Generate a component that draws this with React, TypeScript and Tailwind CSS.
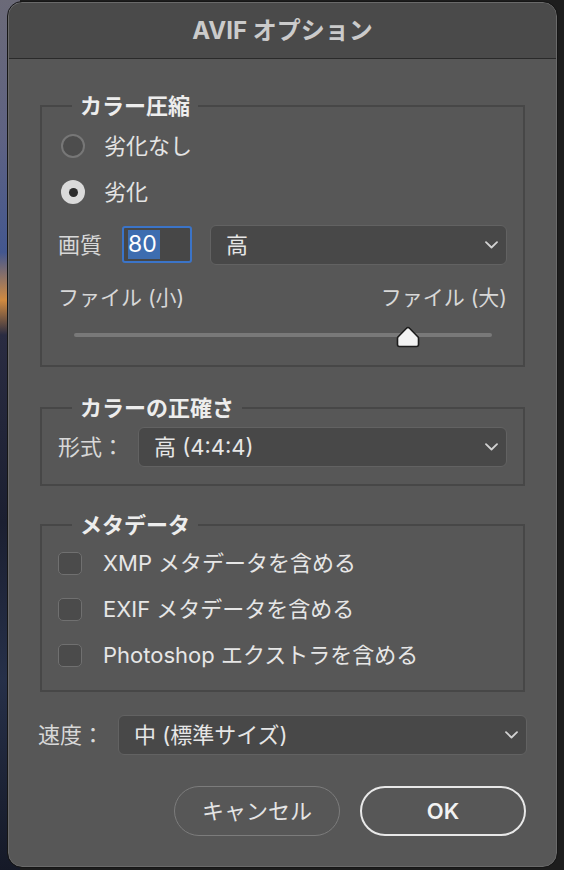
import { useState } from 'react';

function Chevron() {
    return (
        <svg width="13" height="8" viewBox="0 0 13 8" fill="none" className="shrink-0">
            <path d="M1 1.2l5.5 5.3L12 1.2" stroke="#d2d2d2" strokeWidth="1.8" strokeLinecap="round" strokeLinejoin="round" />
        </svg>
    );
}

function Select({ value, className = '' }: { value: string; className?: string }) {
    return (
        <div className={`flex h-[40px] items-center justify-between rounded-[6px] border-[1.5px] border-[#626262] bg-[#484848] pl-[15px] pr-[8px] text-[22px] text-[#e6e6e6] ${className}`}>
            <span className="leading-none">{value}</span>
            <Chevron />
        </div>
    );
}

function Radio({ checked, label }: { checked: boolean; label: string }) {
    return (
        <div className="flex items-center">
            {checked ? (
                <div className="ml-[3px] flex h-[24px] w-[24px] items-center justify-center rounded-full bg-[#dadada]">
                    <div className="h-[9px] w-[9px] rounded-full bg-[#2c2c2c]" />
                </div>
            ) : (
                <div className="ml-[3px] h-[24px] w-[24px] rounded-full border-2 border-[#777777] bg-[#4d4d4d]" />
            )}
            <span className="ml-[19px] text-[22px] leading-none text-[#e4e4e4]">{label}</span>
        </div>
    );
}

function Checkbox({ label }: { label: string }) {
    return (
        <div className="flex h-[46px] items-center">
            <div className="h-[23px] w-[24px] rounded-[5px] border-[1.5px] border-[#707070] bg-[#4b4b4b]" />
            <span className="ml-[21px] text-[22px] leading-none text-[#e6e6e6]">{label}</span>
        </div>
    );
}

function Group({ title, className = '', children }: { title: string; className?: string; children: React.ReactNode }) {
    return (
        <fieldset className={`mx-[2px] border-2 border-[#474747] px-[16px] ${className}`}>
            <legend className="ml-[14px] px-[8px] text-[22px] font-bold leading-[28px] text-[#ededed]">{title}</legend>
            {children}
        </fieldset>
    );
}

export default function App() {
    const [quality] = useState(80);

    return (
        <div className="h-[870px] w-[564px] overflow-hidden bg-[#1d1d1d] bg-[linear-gradient(to_right,transparent_20px,#1d1d1d_20px),linear-gradient(to_bottom,#6b6a78,#5e6283_16%,#43578f_29%,#d08a40_34.5%,#2a2c42_38.5%,#1b1f31_60%,#263049_78%,#151927)] pt-[2px] pl-[8px] [font-family:Inter,'Noto_Sans_CJK_JP',sans-serif]">
            <div className="flex h-[865px] w-[549px] flex-col overflow-hidden rounded-[14px] border border-[#6a6a6a] bg-[#575757] outline outline-[#161616]">
                {/* Title bar */}
                <div className="flex h-[56px] shrink-0 items-center justify-center border-b border-[#2a2a2a] bg-[#4a4a4a]">
                    <span className="text-[24px] font-bold leading-none text-[#cbcbcb]">AVIF オプション</span>
                </div>

                <div className="flex flex-col px-[29px] pt-[33px]">
                    {/* カラー圧縮 */}
                    <Group title="カラー圧縮" className="pb-[5px]">
                        <div className="flex h-[52px] items-center">
                            <Radio checked={false} label="劣化なし" />
                        </div>
                        <div className="flex h-[40px] items-center">
                            <Radio checked label="劣化" />
                        </div>
                        <div className="mt-[13px] flex h-[39px] items-center">
                            <span className="text-[22px] leading-none text-[#d8d8d8]">画質</span>
                            <div className="ml-[20px] flex h-[37px] w-[70px] shrink-0 items-center rounded-[3px] border-2 border-[#3b74c8] bg-[#474747] pl-[4px]">
                                <span className="flex h-[29px] w-[32px] items-center bg-[#3d6db0] text-[23px] leading-none text-white">{quality}</span>
                            </div>
                            <Select value="高" className="ml-[18px] flex-1" />
                        </div>
                        <div className="mt-[20px] flex h-[26px] items-center justify-between text-[21px] leading-none text-[#d8d8d8]">
                            <span>ファイル (小)</span>
                            <span>ファイル (大)</span>
                        </div>
                        <div className="relative ml-[16px] mr-[15px] flex h-[50px] items-center">
                            <div className="h-[4px] w-full rounded-full bg-[#797979]" />
                            <svg
                                width="25"
                                height="22"
                                viewBox="0 0 25 22"
                                className="absolute top-[16px] -translate-x-1/2"
                                style={{ left: `${quality}%` }}
                            >
                                <path
                                    d="M11 2.2a2 2 0 0 1 3 0l8.3 8.5a2 2 0 0 1 .7 1.5V18.5a2 2 0 0 1-2 2H4a2 2 0 0 1-2-2V12.2a2 2 0 0 1 .7-1.5z"
                                    fill="#f2f2f2"
                                    stroke="#1c1c1c"
                                    strokeWidth="1.6"
                                    strokeLinejoin="round"
                                />
                            </svg>
                        </div>
                    </Group>

                    {/* カラーの正確さ */}
                    <Group title="カラーの正確さ" className="mt-[27px] pt-[5px] pb-[17px]">
                        <div className="flex items-center">
                            <span className="w-[66px] shrink-0 text-[22px] leading-none text-[#d8d8d8]">形式：</span>
                            <Select value="高 (4:4:4)" className="ml-[14px] flex-1" />
                        </div>
                    </Group>

                    {/* メタデータ */}
                    <Group title="メタデータ" className="mt-[25px] pt-[1px] pb-[12px]">
                        <Checkbox label="XMP メタデータを含める" />
                        <Checkbox label="EXIF メタデータを含める" />
                        <Checkbox label="Photoshop エクストラを含める" />
                    </Group>

                    {/* 速度 */}
                    <div className="mt-[23px] flex items-center">
                        <span className="w-[66px] shrink-0 text-[22px] leading-none text-[#d8d8d8]">速度：</span>
                        <Select value="中 (標準サイズ)" className="ml-[14px] flex-1" />
                    </div>

                    {/* Buttons */}
                    <div className="mt-[31px] mr-[1px] flex justify-end gap-[20px]">
                        <button className="flex h-[50px] w-[166px] items-center justify-center rounded-full border-[1.5px] border-[#7c7c7c] text-[22px] leading-none text-[#e4e4e4]">
                            キャンセル
                        </button>
                        <button className="flex h-[50px] w-[166px] items-center justify-center rounded-full border-2 border-[#e8e8e8] text-[22px] font-semibold leading-none text-[#f2f2f2]">
                            OK
                        </button>
                    </div>
                </div>
            </div>
        </div>
    );
}
